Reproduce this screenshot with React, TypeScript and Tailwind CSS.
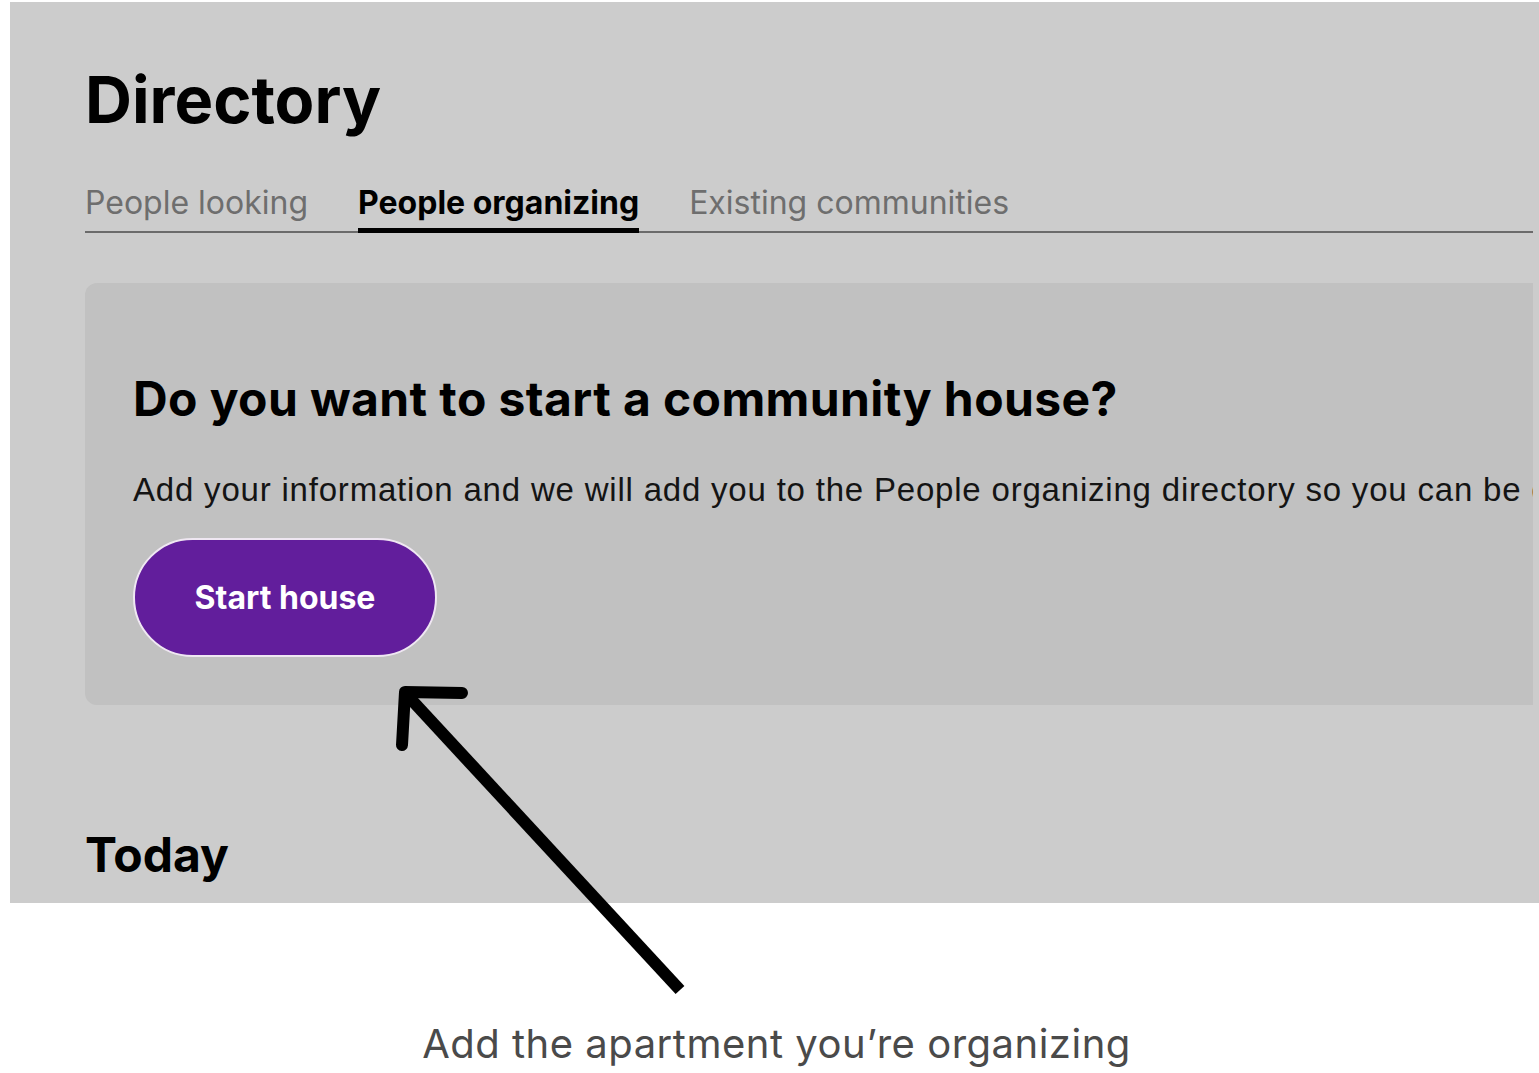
import React from 'react';

const tabs = ['People looking', 'People organizing', 'Existing communities'];

export default function App() {
  return (
    <div className="relative w-[1539px] h-[1073px] bg-white overflow-hidden font-['Inter',sans-serif]">
      <div className="ml-[10px] mt-[2px] h-[901px] bg-[#cccccc] overflow-hidden pl-[75px] pr-[6px]">
        <h1 className="pt-[60px] text-[65px] leading-[76px] font-bold text-black">Directory</h1>

        <div className="mt-[40px] flex gap-[50px] border-b-2 border-[#6b6b6b] text-[32px] leading-[40px]">
          {tabs.map((t, i) => (
            <div
              key={t}
              className={
                i === 1
                  ? 'pt-[5px] pb-[5px] -mb-[2px] border-b-[5px] border-black font-bold text-black'
                  : 'pt-[5px] pb-[8px] text-[#6e6e6e]'
              }
            >
              {t}
            </div>
          ))}
        </div>

        <div className="mt-[50px] h-[422px] rounded-l-[12px] bg-[#c1c1c1] pl-[48px] pt-[86px] overflow-hidden whitespace-nowrap">
          <h2 className="text-[48px] leading-[60px] font-bold tracking-[0.4px] text-black">Do you want to start a community house?</h2>
          <p className="mt-[41px] font-['Liberation_Sans',Arial,sans-serif] text-[33px] leading-[40px] tracking-[0.8px] text-[#141414]">
            Add your information and we will add you to the People organizing directory so you can be contacted by people looking.
          </p>
          <button className="mt-[28px] w-[304px] h-[119px] rounded-full border-2 border-[#efe7f2] bg-[#621e9c] text-white text-[32px] font-bold">
            Start house
          </button>
        </div>

        <h2 className="mt-[120px] text-[48px] leading-[60px] font-bold text-black">Today</h2>
      </div>

      <p className="mt-[117px] pl-[14px] text-center text-[40px] leading-[48px] text-[#4a4a4a] tracking-[0.5px]">
        Add the apartment you’re organizing
      </p>

      <svg className="absolute left-0 top-0" width="1539" height="1073" viewBox="0 0 1539 1073" fill="none">
        <path d="M680 990 L408 696" stroke="black" strokeWidth="12" />
        <path d="M402 745 L405 692 L462 693" stroke="black" strokeWidth="12" strokeLinecap="round" strokeLinejoin="round" />
      </svg>
    </div>
  );
}
